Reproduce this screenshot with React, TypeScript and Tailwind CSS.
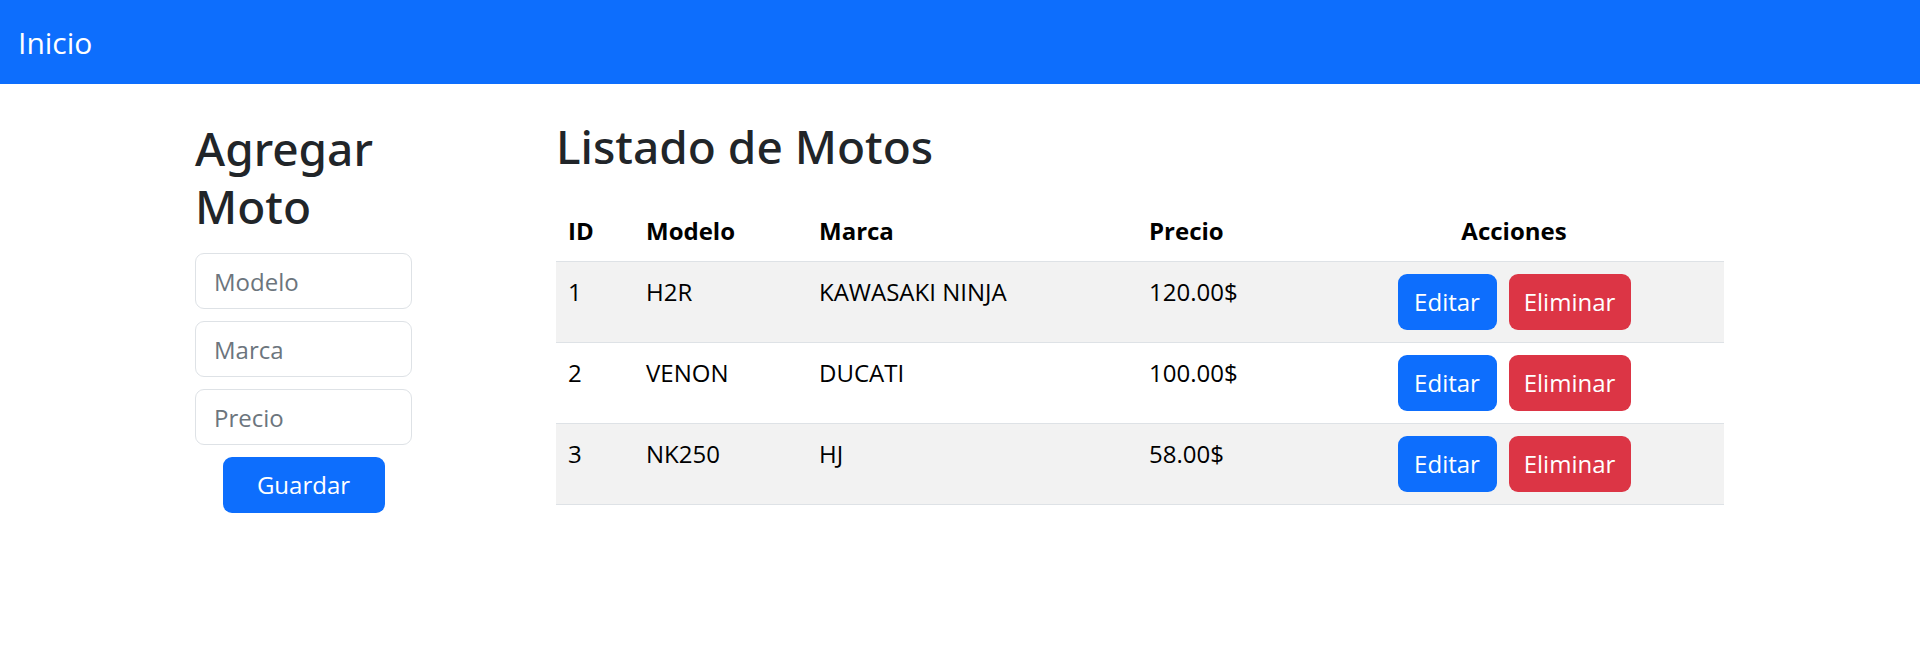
type Moto = {
  id: number;
  modelo: string;
  marca: string;
  precio: string;
};

const motos: Moto[] = [
  { id: 1, modelo: "H2R", marca: "KAWASAKI NINJA", precio: "120.00$" },
  { id: 2, modelo: "VENON", marca: "DUCATI", precio: "100.00$" },
  { id: 3, modelo: "NK250", marca: "HJ", precio: "58.00$" },
];

function Navbar() {
  return (
    <nav className="flex h-[84px] items-center bg-[#0d6efd] px-[18px]">
      <a href="#" className="text-[30px] leading-[45px] text-white">
        Inicio
      </a>
    </nav>
  );
}

function MotoForm() {
  return (
    <div className="mt-[36px] ml-[195px] w-[217px] shrink-0">
      <h2 className="font-['Noto_Sans','Open_Sans',sans-serif] text-[46px] font-medium leading-[57.6px] text-[#212529]">
        Agregar Moto
      </h2>
      <form className="mt-[18px] flex flex-col gap-[12px]">
        {["Modelo", "Marca", "Precio"].map((field) => (
          <input
            key={field}
            type="text"
            placeholder={field}
            className="h-[56px] w-full rounded-[9px] border border-[#dee2e6] bg-white px-[18px] text-[24px] text-[#212529] outline-none placeholder:text-[#6c757d]"
          />
        ))}
        <div className="flex justify-center">
          <button
            type="submit"
            className="h-[56px] w-[162px] rounded-[9px] bg-[#0d6efd] text-[24px] text-white"
          >
            Guardar
          </button>
        </div>
      </form>
    </div>
  );
}

function MotoTable() {
  return (
    <div className="mt-[34px] ml-[144px] w-[1168px] shrink-0">
      <h2 className="font-['Noto_Sans','Open_Sans',sans-serif] text-[46px] font-medium leading-[57.6px] text-[#212529]">
        Listado de Motos
      </h2>
      <table className="mt-[25px] w-full table-fixed border-collapse text-[24px] leading-[36px] text-black">
        <colgroup>
          <col className="w-[78px]" />
          <col className="w-[173px]" />
          <col className="w-[330px]" />
          <col className="w-[167px]" />
          <col className="w-[420px]" />
        </colgroup>
        <thead>
          <tr className="border-b border-[#dee2e6]">
            <th className="p-[12px] text-left align-top font-bold">ID</th>
            <th className="p-[12px] text-left align-top font-bold">Modelo</th>
            <th className="p-[12px] text-left align-top font-bold">Marca</th>
            <th className="p-[12px] text-left align-top font-bold">Precio</th>
            <th className="p-[12px] text-center align-top font-bold">
              Acciones
            </th>
          </tr>
        </thead>
        <tbody>
          {motos.map((moto, i) => (
            <tr
              key={moto.id}
              className={
                i % 2 === 0
                  ? "border-b border-[#dee2e6] bg-[#f2f2f2]"
                  : "border-b border-[#dee2e6] bg-white"
              }
            >
              <td className="p-[12px] align-top">{moto.id}</td>
              <td className="p-[12px] align-top">{moto.modelo}</td>
              <td className="p-[12px] align-top">{moto.marca}</td>
              <td className="p-[12px] align-top">{moto.precio}</td>
              <td className="p-[12px] align-top">
                <div className="flex justify-center gap-[12px]">
                  <button className="h-[56px] w-[99px] rounded-[9px] bg-[#0d6efd] text-[24px] text-white">
                    Editar
                  </button>
                  <button className="h-[56px] w-[122px] rounded-[9px] bg-[#dc3545] text-[24px] text-white">
                    Eliminar
                  </button>
                </div>
              </td>
            </tr>
          ))}
        </tbody>
      </table>
    </div>
  );
}

export default function App() {
  return (
    <div className="min-h-[654px] bg-white font-['Open_Sans','Noto_Sans',sans-serif]">
      <Navbar />
      <div className="flex items-start">
        <MotoForm />
        <MotoTable />
      </div>
    </div>
  );
}
